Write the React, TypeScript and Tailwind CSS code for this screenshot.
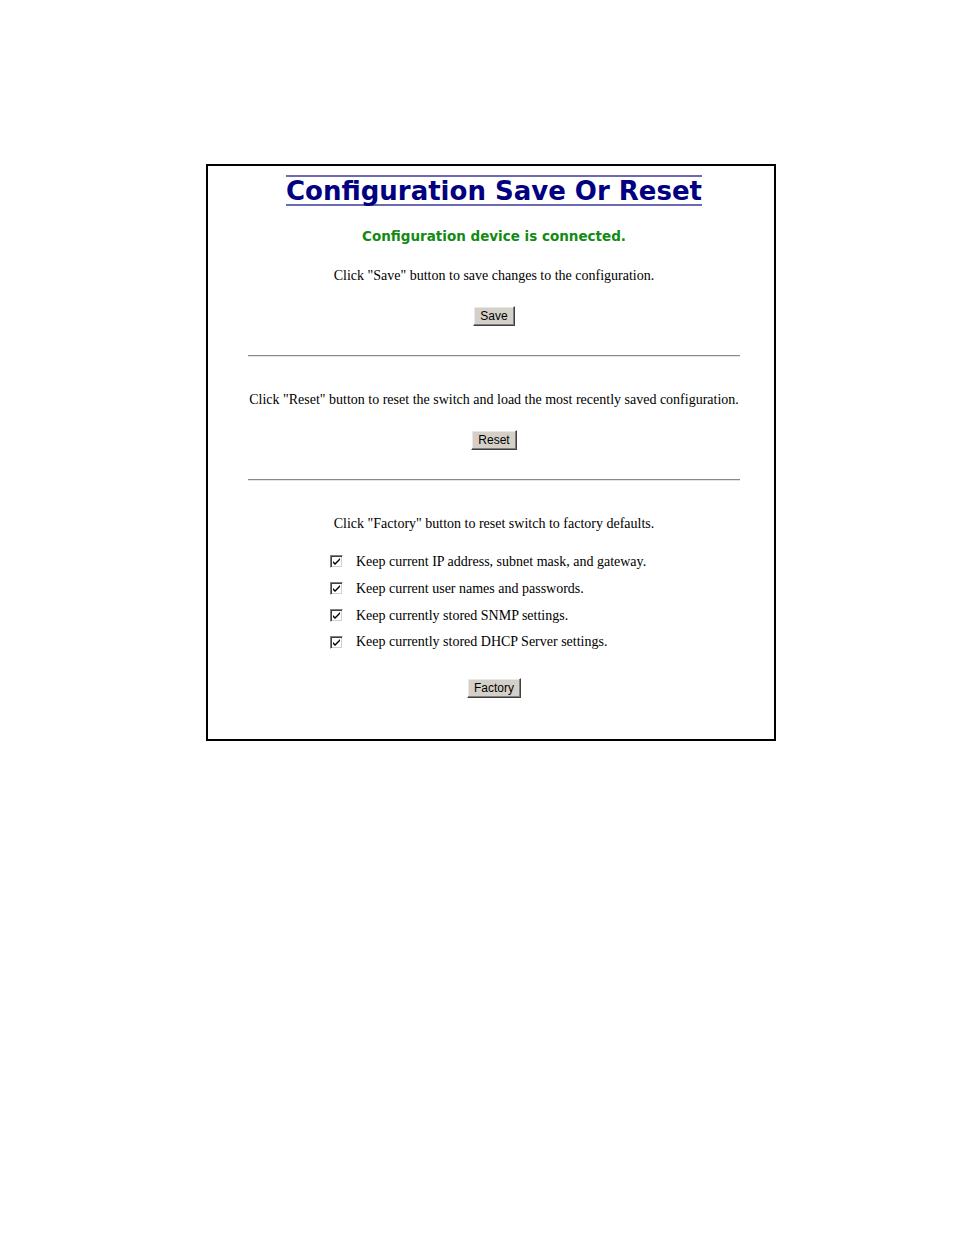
const options = [
  'Keep current IP address, subnet mask, and gateway.',
  'Keep current user names and passwords.',
  'Keep currently stored SNMP settings.',
  'Keep currently stored DHCP Server settings.',
]

function OldButton({ label }: { label: string }) {
  return (
    <button
      type="button"
      className="flex h-[20px] items-center border border-t-white border-l-white border-r-[#404040] border-b-[#404040] bg-[#d4d0c8] px-[6px] text-[12px] leading-[16px] text-black shadow-[inset_-1px_-1px_0_#808080,inset_1px_1px_0_#e8e8e8] [font-family:'Liberation_Sans',Arial,sans-serif]"
    >
      {label}
    </button>
  )
}

function OldCheckbox() {
  return (
    <span className="flex h-[13px] w-[13px] items-center justify-center border border-t-[#808080] border-l-[#808080] border-r-white border-b-white bg-white shadow-[inset_1px_1px_0_#404040,inset_-1px_-1px_0_#d4d0c8]">
      <svg width="7" height="7" viewBox="0 0 7 7" className="block">
        <path d="M0 3 L2 5 L7 0 L7 2 L2 7 L0 5 Z" fill="#000" />
      </svg>
    </span>
  )
}

function Rule() {
  return <div className="h-[2px] w-[492px] border-t border-t-[#8a8a8a] border-b border-b-[#e4e4e4]" />
}

export default function App() {
  return (
    <main className="min-h-[1235px] bg-white pl-[206px] pt-[164px]">
      <div className="h-[577px] w-[570px] border-2 border-black bg-white pl-[6px]">
        <div className="flex flex-col items-center text-black [font-family:'Liberation_Serif','Times_New_Roman',serif]">
          <h1 className="mt-[9px] h-[31px] border-y-2 border-[#6b6bb5] text-[26px] font-bold leading-[28px] text-[#000080] [font-family:'DejaVu_Sans',Verdana,sans-serif]">
            Configuration Save Or Reset
          </h1>

          <p className="mt-[20px] text-[13.5px] font-bold leading-[20px] text-[#138a13] [font-family:'DejaVu_Sans',Verdana,sans-serif]">
            Configuration device is connected.
          </p>

          <p className="mt-[21px] text-[14px] leading-[18px]">
            Click "Save" button to save changes to the configuration.
          </p>
          <div className="mt-[21px] flex">
            <OldButton label="Save" />
          </div>

          <div className="mt-[29px] flex">
            <Rule />
          </div>

          <p className="mt-[34px] text-[14px] leading-[18px]">
            Click "Reset" button to reset the switch and load the most recently saved configuration.
          </p>
          <div className="mt-[21px] flex">
            <OldButton label="Reset" />
          </div>

          <div className="mt-[29px] flex">
            <Rule />
          </div>

          <p className="mt-[34px] text-[14px] leading-[18px]">
            Click "Factory" button to reset switch to factory defaults.
          </p>

          <div className="mt-[15px] w-full pl-[116px]">
            {options.map((o, i) => (
              <div key={o} className={`flex items-center gap-[13px] ${i === 3 ? 'h-[26px]' : 'h-[27px]'}`}>
                <OldCheckbox />
                <span className="text-[14px] leading-[18px]">{o}</span>
              </div>
            ))}
          </div>

          <div className="mt-[23px] flex">
            <OldButton label="Factory" />
          </div>
        </div>
      </div>
    </main>
  )
}
